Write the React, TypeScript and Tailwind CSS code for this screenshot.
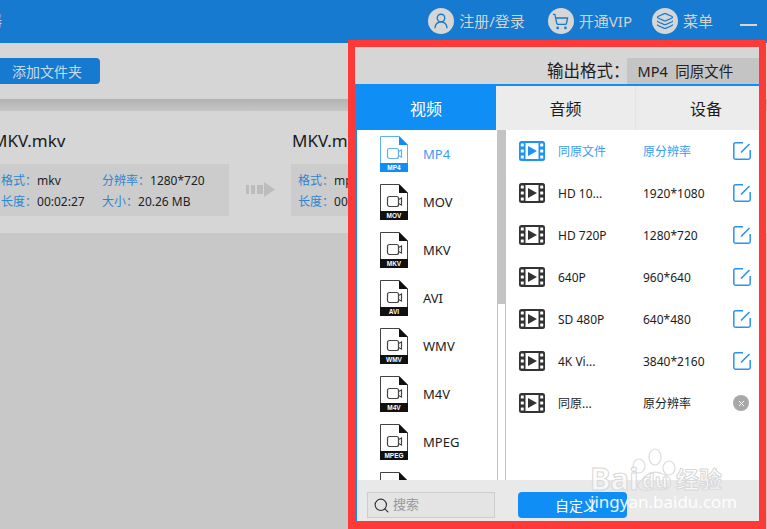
import { Layers, Search, ShoppingCart, UserRound, X } from "lucide-react";

const BLUE = "#0f8ff5";
const COLON = "\uFF1A";

function FileIcon({ label, active }: { label: string; active?: boolean }) {
  const c = active ? BLUE : "#111111";
  const line = active ? "#5fb1f7" : "#444444";
  return (
    <svg width="28" height="36" viewBox="0 0 28 36" className="shrink-0">
      <path d="M0.5 27V0.5H19L27.5 9V27" fill="#fff" stroke={line} />
      <path d="M19 0L28 9H19Z" fill={c} />
      <rect x="0" y="27" width="28" height="9" fill={c} />
      <rect x="7.5" y="12.5" width="11" height="10" rx="2" fill="none" stroke={line} strokeWidth="1.2" />
      <path d="M18.5 15.5L21.5 14V21L18.5 19.5" fill="none" stroke={line} strokeWidth="1.2" />
      <text x="14" y="34" textAnchor="middle" fontSize="6.5" fontWeight="700" fill="#fff" fontFamily="'Liberation Sans',sans-serif">
        {label}
      </text>
    </svg>
  );
}

function FilmIcon({ active }: { active?: boolean }) {
  const c = active ? "#1f93f3" : "#333333";
  return (
    <svg width="26" height="20" viewBox="0 0 26 20" className="shrink-0">
      <rect width="26" height="20" rx="2.5" fill={c} />
      <rect x="6.5" y="2" width="13" height="16" fill="#fff" />
      <rect x="1.8" y="2.5" width="3" height="3" rx="0.5" fill="#fff" />
      <rect x="1.8" y="8.5" width="3" height="3" rx="0.5" fill="#fff" />
      <rect x="1.8" y="14.5" width="3" height="3" rx="0.5" fill="#fff" />
      <rect x="21.2" y="2.5" width="3" height="3" rx="0.5" fill="#fff" />
      <rect x="21.2" y="8.5" width="3" height="3" rx="0.5" fill="#fff" />
      <rect x="21.2" y="14.5" width="3" height="3" rx="0.5" fill="#fff" />
      <path d="M9 5L18 10L9 15Z" fill={c} />
    </svg>
  );
}

function EditIcon() {
  return (
    <svg width="18" height="18" viewBox="0 0 18 18" className="shrink-0">
      <path d="M10 0.8H2.5Q0.8 0.8 0.8 2.5V15.5Q0.8 17.2 2.5 17.2H15.5Q17.2 17.2 17.2 15.5V8" fill="none" stroke="#2a93ee" strokeWidth="1.5" />
      <path d="M8 10.5L16.5 2" fill="none" stroke="#2a93ee" strokeWidth="1.6" />
    </svg>
  );
}

function HeaderItem({ icon, text }: { icon: React.ReactNode; text: string }) {
  return (
    <div className="flex items-center gap-[5px]">
      <div className="flex h-[26px] w-[26px] items-center justify-center rounded-full bg-[#d6d6d6] text-[#157ad0]">{icon}</div>
      <span className="text-[15px] text-[#d3d3d3]">{text}</span>
    </div>
  );
}

function Info({ label, value, w }: { label: string; value: string; w: string }) {
  return (
    <div className={`flex ${w} whitespace-nowrap text-[12px] leading-[21px]`}>
      <span className="text-[#2d86cf]">{label + COLON}</span>
      <span className="text-[12px] text-[#222]">{value}</span>
    </div>
  );
}

const formats = ["MP4", "MOV", "MKV", "AVI", "WMV", "M4V", "MPEG", ""];
const presets: [string, string, boolean][] = [
  ["同原文件", "原分辨率", true],
  ["HD 10...", "1920*1080", true],
  ["HD 720P", "1280*720", true],
  ["640P", "960*640", true],
  ["SD 480P", "640*480", true],
  ["4K Vi...", "3840*2160", true],
  ["同原...", "原分辨率", false],
];

export default function App() {
  return (
    <div className="relative h-[529px] w-[767px] overflow-hidden bg-[#c8c8c8] font-['Noto_Sans','Noto_Sans_CJK_SC',sans-serif]">
      {/* header */}
      <header className="flex h-[43px] items-start justify-between bg-[#157ad0] pt-2">
        <span className="-ml-[13px] mt-[1px] text-[15px] text-[#d3d3d3]">器</span>
        <div className="flex items-start">
          <HeaderItem icon={<UserRound size={18} strokeWidth={1.8} />} text="注册/登录" />
          <div className="ml-[23px]">
            <HeaderItem icon={<ShoppingCart size={17} strokeWidth={1.8} />} text="开通VIP" />
          </div>
          <div className="ml-[20px]">
            <HeaderItem icon={<Layers size={18} strokeWidth={1.5} />} text="菜单" />
          </div>
          <div className="ml-[27px] mr-[10px] mt-[16px] h-[2px] w-[17px] bg-[#d6d6d6]" />
        </div>
      </header>

      {/* toolbar */}
      <div className="flex h-[56px] items-start bg-[#d6d6d6] pt-[15px]">
        <button className="h-[26px] w-[100px] rounded-r-[4px] bg-[#157ad0] pl-3 text-left text-[14px] text-[#c9dcec]">添加文件夹</button>
      </div>
      <div className="h-[12px] bg-gradient-to-b from-[#b2b2b2] to-[#c6c6c6]" />

      {/* file card */}
      <div className="flex h-[122px] items-start bg-[#d6d6d6] pt-[17px]">
        <div className="w-[229px]">
          <div className="-ml-[8px] text-[17px] leading-[26px] text-[#1a1a1a]">MKV.mkv</div>
          <div className="mt-[10px] h-[52px] bg-[#cccccc] pl-[1px] pt-[6px]">
            <div className="flex">
              <Info w="w-[101px]" label="格式" value="mkv" />
              <Info w="" label="分辨率" value="1280*720" />
            </div>
            <div className="flex">
              <Info w="w-[101px]" label="长度" value="00:02:27" />
              <Info w="" label="大小" value="20.26 MB" />
            </div>
          </div>
        </div>
        <div className="flex w-[62px] justify-center pt-[54px]">
          <svg width="29" height="15" viewBox="0 0 29 15">
            <rect x="0" y="3" width="3" height="9" fill="#bcbcbc" />
            <rect x="5" y="3" width="4" height="9" fill="#bcbcbc" />
            <rect x="11" y="3" width="6" height="9" fill="#bcbcbc" />
            <path d="M18 0L29 7.5L18 15Z" fill="#bcbcbc" />
          </svg>
        </div>
        <div className="w-[200px]">
          <div className="ml-[1px] text-[17px] leading-[26px] text-[#1a1a1a]">MKV.mkv</div>
          <div className="mt-[10px] h-[52px] bg-[#cccccc] pl-[7px] pt-[6px]">
            <Info w="" label="格式" value="mp4" />
            <Info w="" label="长度" value="00:02:27" />
          </div>
        </div>
      </div>

      {/* output format panel */}
      <section className="absolute left-[348px] top-[40px] flex h-[489px] w-[418px] flex-col border-x-[7px] border-b-[8px] border-t-[7px] border-[#ff3838] bg-[#d6d6d6]">
        <div className="flex h-[37px] shrink-0 items-end">
          <span className="-mr-[3px] ml-[192px] text-[16.5px] leading-[26px] text-[#1c1c1c]">{"输出格式" + COLON}</span>
          <div className="flex h-[26px] flex-1 items-center whitespace-pre bg-[#c4c4c4] pl-[11px] pt-[1px] text-[14.5px] text-[#222]">MP4  同原文件</div>
        </div>
        <div className="flex min-h-0 flex-1 flex-col border-l-2 border-[#0f8ff5]">
          <div className="h-[2px] shrink-0 bg-[#0f8ff5]" />
          <div className="flex h-[44px] shrink-0 overflow-hidden text-[16px]">
            <div className="flex w-[139px] shrink-0 items-center justify-center bg-[#0f8ff5] pr-[1px] pt-[2px] text-white">视频</div>
            <div className="flex w-[140px] shrink-0 items-center justify-center border-r border-[#e4e4e4] bg-[#ececec] pt-[2px] text-[#1c1c1c]">音频</div>
            <div className="flex w-[140px] shrink-0 items-center justify-center bg-[#ececec] pt-[2px] text-[#1c1c1c]">设备</div>
          </div>
          <div className="flex min-h-0 flex-1 bg-white">
            <div className="w-[140px] shrink-0 overflow-hidden pl-[23px] pt-[6px]">
              {formats.map((f, i) => (
                <div key={i} className="flex h-[48px] items-start gap-[15px]">
                  <FileIcon label={f} active={i === 0} />
                  <span className={`mt-[9px] text-[13px] leading-[18px] ${i === 0 ? "text-[#3a9bf5]" : "text-[#1c1c1c]"}`}>{f}</span>
                </div>
              ))}
            </div>
            <div className="w-[9px] shrink-0 border-x border-[#c4c4c4]">
              <div className="h-[174px] bg-[#c4c4c4]" />
            </div>
            <div className="flex-1">
              {presets.map(([name, res, editable], i) => (
                <div key={i} className={`flex h-[42px] items-center text-[12px] ${i === 0 ? "text-[#3a9bf5]" : "text-[#1c1c1c]"}`}>
                  <div className="ml-[13px]">
                    <FilmIcon active={i === 0} />
                  </div>
                  <span className="ml-[13px] mt-[1px] w-[85px] whitespace-nowrap">{name}</span>
                  <span className="mt-[1px] w-[90px] whitespace-nowrap">{res}</span>
                  {editable ? (
                    <EditIcon />
                  ) : (
                    <div className="flex h-4 w-4 items-center justify-center rounded-full bg-[#a8a8a8] text-white">
                      <X size={9} strokeWidth={2.5} />
                    </div>
                  )}
                </div>
              ))}
            </div>
          </div>
          <div className="flex h-[41px] shrink-0 items-start bg-[#e9e9e9] pl-[10px] pt-[12px]">
            <div className="flex h-[26px] w-[128px] items-center border border-[#cdcdcd] bg-[#e4e4e4] pl-[5px] text-[13px] text-[#999]">
              <Search size={17} className="text-[#333]" strokeWidth={1.6} />
              <span className="ml-[3px]">搜索</span>
            </div>
            <button className="ml-[23px] h-[26px] w-[109px] rounded-[4px] bg-[#0f8ff5] pl-[7px] text-[14px] text-white">自定义</button>
          </div>
        </div>
      </section>

      {/* Baidu watermark */}
      <div className="pointer-events-none absolute left-[590px] top-[446px] h-[72px] w-[136px]">
        <svg width="136" height="56" viewBox="0 0 136 56" className="absolute left-0 top-0" fill="none" stroke="#dcdcdc" strokeWidth="1.2">
          <ellipse cx="49" cy="20" rx="6" ry="7" />
          <ellipse cx="65" cy="11" rx="6" ry="8" />
          <ellipse cx="79" cy="22" rx="6" ry="7" />
          <path d="M50 36Q60 22 73 28Q83 32 80 39Q78 46 65 43Q52 47 48 41Q47 38 50 36Z" />
        </svg>
        <span className="absolute left-0 top-[12px] text-[31px] font-bold leading-[40px] text-white/60 [-webkit-text-stroke:1px_#d8d8d8]">Bai</span>
        <span className="absolute left-[52px] top-[22px] text-[20px] font-bold leading-[26px] text-white/60 [-webkit-text-stroke:1px_#d8d8d8]">du</span>
        <span className="absolute left-[86px] top-[18px] text-[23px] font-bold leading-[30px] text-white/60 [-webkit-text-stroke:1px_#d8d8d8]">经验</span>
        <span className="absolute left-0 top-[45px] whitespace-nowrap text-[17px] leading-[22px] text-white/90">jingyan.baidu.com</span>
      </div>
    </div>
  );
}
